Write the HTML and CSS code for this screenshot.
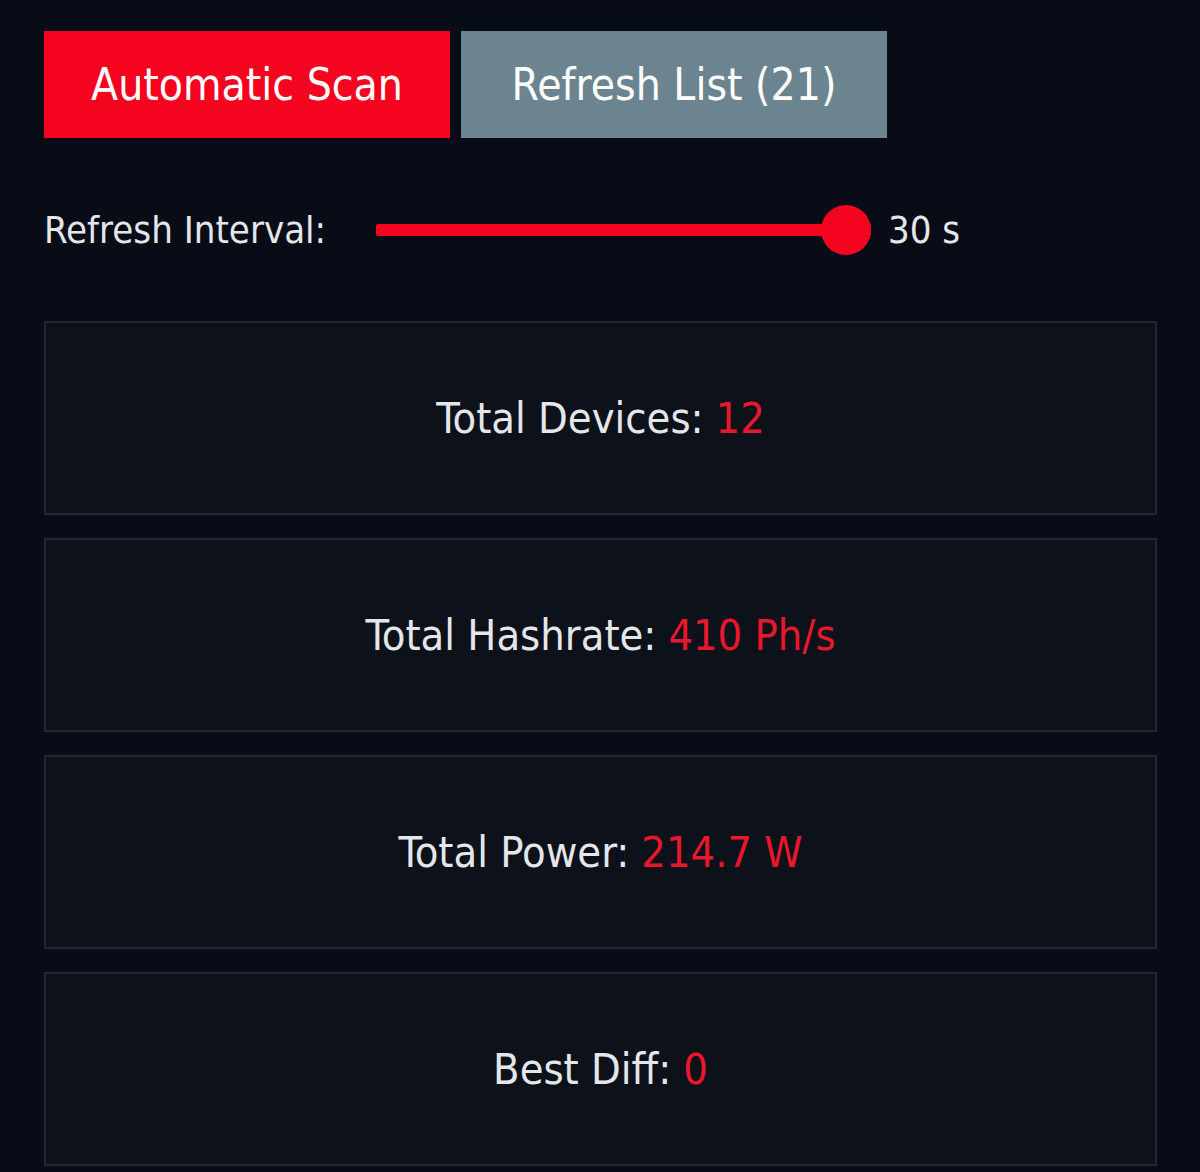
FILE: index.html
```html
<!DOCTYPE html>
<html lang="en">

<head>
    <title>Miners</title>
    <meta charset="utf-8">
    <meta name="viewport" content="width=device-width, initial-scale=1">
    <link rel="stylesheet" href="styles.css">
</head>

<body>
    <div id="scanner_app">
        <div class="scanner_buttons">
            <button id="scanner_auto-scan" class="scanner_btn scanner_btn-red">Automatic Scan</button>
            <button id="scanner_refresh" class="scanner_btn scanner_btn-gray">Refresh List (21)</button>
        </div>

        <div class="scanner_interval-row">
            <label for="scanner_interval-slider">Refresh Interval:</label>
            <input type="range" id="scanner_interval-slider" min="5" max="30" value="30">
            <span id="scanner_interval-display">30 s</span>
        </div>

        <div class="scanner_stats">
            <div class="scanner_card">Total Devices: <span class="scanner_value">12</span></div>
            <div class="scanner_card">Total Hashrate: <span class="scanner_value">410 Ph/s</span></div>
            <div class="scanner_card">Total Power: <span class="scanner_value">214.7 W</span></div>
            <div class="scanner_card">Best Diff: <span class="scanner_value">0</span></div>
        </div>
    </div>

    <script type="text/javascript">
        const intervalSlider = document.getElementById('scanner_interval-slider');
        const intervalDisplay = document.getElementById('scanner_interval-display');

        intervalSlider.addEventListener('input', () => {
            intervalDisplay.textContent = intervalSlider.value + ' s';
        });
    </script>
</body>

</html>
```

FILE: styles.css
```css
body {
    font-family: "DejaVu Sans", sans-serif;
    font-stretch: condensed;
    background: #070c16;
    color: #e4e6ea;
    margin: 0;
}

#scanner_app {
    padding: 31px 43px 0 44px;
}

.scanner_buttons {
    display: flex;
    gap: 11px;
}

.scanner_btn {
    font-family: inherit;
    font-stretch: condensed;
    font-size: 44px;
    color: #ffffff;
    border: none;
    height: 107px;
    cursor: pointer;
}

.scanner_btn-red {
    background: #f5041f;
    width: 406px;
}

.scanner_btn-gray {
    background: #6b8490;
    width: 426px;
}

.scanner_interval-row {
    display: flex;
    align-items: center;
    height: 183px;
    font-size: 38px;
}

.scanner_interval-row label {
    width: 332px;
}

#scanner_interval-slider {
    -webkit-appearance: none;
    appearance: none;
    width: 495px;
    height: 12px;
    margin: 0;
    background: #f5041f;
    border-radius: 2px;
    outline: none;
}

#scanner_interval-slider::-webkit-slider-thumb {
    -webkit-appearance: none;
    appearance: none;
    width: 50px;
    height: 50px;
    border-radius: 50%;
    background: #f5041f;
}

#scanner_interval-display {
    margin-left: 17px;
}

.scanner_stats {
    display: flex;
    flex-direction: column;
    gap: 23px;
}

.scanner_card {
    height: 190px;
    display: flex;
    align-items: center;
    justify-content: center;
    background: #0c111a;
    border: 2px solid #212833;
    font-size: 43px;
}

.scanner_value {
    color: #e8172b;
    margin-left: 12px;
}
```
